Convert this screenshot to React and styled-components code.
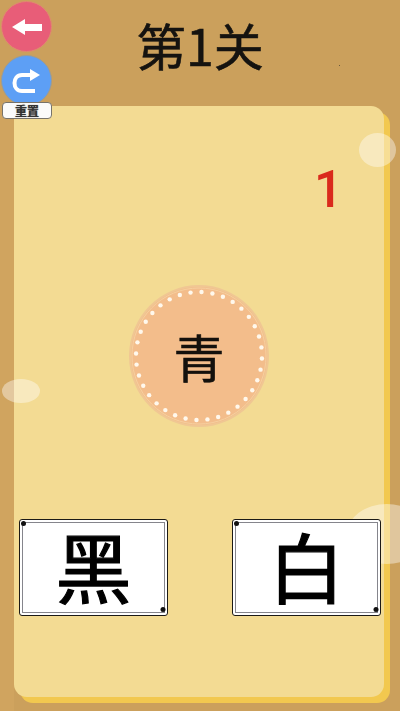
import React from "react";
import styled, { createGlobalStyle } from "styled-components";

const Global = createGlobalStyle`
  html, body { margin: 0; padding: 0; background: #cba05c; }
  #root { width: 400px; height: 711px; overflow: hidden; }
`;
const cjk = `"Noto Sans CJK SC", "Liberation Sans", sans-serif`;

const Screen = styled.div`
  position: relative;
  width: 400px;
  height: 711px;
  display: flex;
  flex-direction: column;
  overflow: hidden;
  background: linear-gradient(90deg, #d0a45f 0, #d0a45f 14px, #cba05c 14px);
`;
const Header = styled.header`
  height: 87px;
  padding-bottom: 19px;
  display: flex;
  align-items: center;
  justify-content: center;
  background: #cba05c;
`;
const Title = styled.h1`
  margin: 0;
  font: 400 50px/1 ${cjk};
  -webkit-text-stroke: 0.6px #151310;
  color: #151310;
`;
const Panel = styled.main`
  width: 370px;
  height: 591px;
  margin-left: 14px;
  padding: 0 3px 0 5px;
  box-sizing: border-box;
  display: flex;
  flex-direction: column;
  background: #f3db93;
  border-radius: 0 13px 13px 13px;
  box-shadow: 6px 6px 0 #f2c84f;
`;
const Score = styled.div`
  height: 179px;
  padding: 58px 38px 0 0;
  box-sizing: border-box;
  text-align: right;
  font: 500 51px/1 Roboto, "Liberation Sans", sans-serif;
  color: #da2a1c;
`;
const MedallionRow = styled.div`
  display: flex;
  justify-content: center;
  margin-left: -2px;
`;
const Medallion = styled.div`
  position: relative;
  width: 140px;
  height: 142px;
  box-sizing: border-box;
  border-radius: 50%;
  border: 2px solid #f0c793;
  background: #f3bd8b;
  display: flex;
  align-items: center;
  justify-content: center;
  font: 400 51px/1 ${cjk};
  -webkit-text-stroke: 0.6px #14110d;
  color: #14110d;
`;
const MedallionRing = styled.svg`
  position: absolute;
  inset: -2px;
`;
const MedallionText = styled.span`
  position: relative;
`;
const Cards = styled.div`
  margin-top: 92px;
  display: flex;
  justify-content: space-between;
  position: relative;
  z-index: 2;
`;
const Card = styled.div`
  position: relative;
  width: 149px;
  height: 97px;
  padding-bottom: 5px;
  box-sizing: border-box;
  background: #fff;
  border: 1.5px solid #1c1a16;
  border-radius: 3px;
  display: flex;
  align-items: center;
  justify-content: center;
  font: 400 76px/1 ${cjk};
  -webkit-text-stroke: 1.2px #000;
  color: #000;
  &::before {
    content: "";
    position: absolute;
    inset: 2px;
    border: 1px solid #85858c;
  }
  &::after {
    content: "";
    position: absolute;
    left: 1px;
    top: 1px;
    width: 5px;
    height: 5px;
    border-radius: 50%;
    background: #111;
    box-shadow: 139.5px 86px 0 #111;
  }
`;
const RoundButton = styled.button`
  position: absolute;
  left: 1px;
  top: ${(p) => p.$top}px;
  width: 51px;
  height: 51px;
  padding: 0;
  box-sizing: border-box;
  border-radius: 50%;
  border: 1.5px solid ${(p) => p.$ring};
  background: ${(p) => p.$fill};
  display: flex;
  align-items: center;
  justify-content: center;
`;
const ResetLabel = styled.div`
  position: absolute;
  left: 2px;
  top: 102px;
  width: 50px;
  height: 17px;
  box-sizing: border-box;
  background: #fbfbfa;
  border: 1px solid #77736a;
  border-radius: 4px;
  display: flex;
  align-items: center;
  justify-content: center;
  font: 700 12px/1 ${cjk};
  color: #333;
  text-shadow: 0 0 1px #555;
`;
const Spot = styled.div`
  position: absolute;
  left: ${(p) => p.$x}px;
  top: ${(p) => p.$y}px;
  width: ${(p) => p.$w}px;
  height: ${(p) => p.$h}px;
  border-radius: 50%;
  background: rgba(255, 255, 255, 0.4);
  z-index: 1;
`;
const Speck = styled.div`
  position: absolute;
  left: 339px;
  top: 65px;
  width: 1px;
  height: 1px;
  background: #6b5a3e;
`;

const dots = Array.from({ length: 36 }, (_, i) => {
  const a = (i / 36) * Math.PI * 2 + 0.04;
  return { cx: 70 + 63 * Math.cos(a), cy: 71 + 64 * Math.sin(a) };
});

export default function App() {
  return (
    <Screen>
      <Global />
      <Header>
        <Title>第1关</Title>
      </Header>
      <Panel>
        <Score>1</Score>
        <MedallionRow>
          <Medallion>
            <MedallionRing width="140" height="142" viewBox="0 0 140 142">
              <ellipse cx="70" cy="71" rx="67" ry="68" fill="none" stroke="#f6d09f" strokeWidth="1" />
              {dots.map((d, i) => (
                <circle key={i} cx={d.cx} cy={d.cy} r="2.2" fill="#fff8ec" />
              ))}
            </MedallionRing>
            <MedallionText>青</MedallionText>
          </Medallion>
        </MedallionRow>
        <Cards>
          <Card>黑</Card>
          <Card>白</Card>
        </Cards>
      </Panel>
      <Spot $x={359} $y={133} $w={37} $h={34} />
      <Spot $x={2} $y={379} $w={38} $h={24} />
      <Spot $x={347} $y={504} $w={80} $h={60} />
      <Speck />
      <RoundButton $top={1} $fill="#e85d78" $ring="#e0896f" aria-label="返回">
        <svg width="30" height="16" viewBox="0 0 30 16">
          <path d="M0 8 L13 0 V5 H30 V12 H13 V16 Z" fill="#fff" />
        </svg>
      </RoundButton>
      <RoundButton $top={55} $fill="#5d9ff5" $ring="#9c9c94" aria-label="重置">
        <svg width="30" height="30" viewBox="0 0 30 30">
          <path d="M23 25 H10 C0 25 0 9 10 9 H18" fill="none" stroke="#fff" strokeWidth="4" />
          <path d="M18 3 L28 9 L18 15 Z" fill="#fff" />
        </svg>
      </RoundButton>
      <ResetLabel>重置</ResetLabel>
    </Screen>
  );
}
